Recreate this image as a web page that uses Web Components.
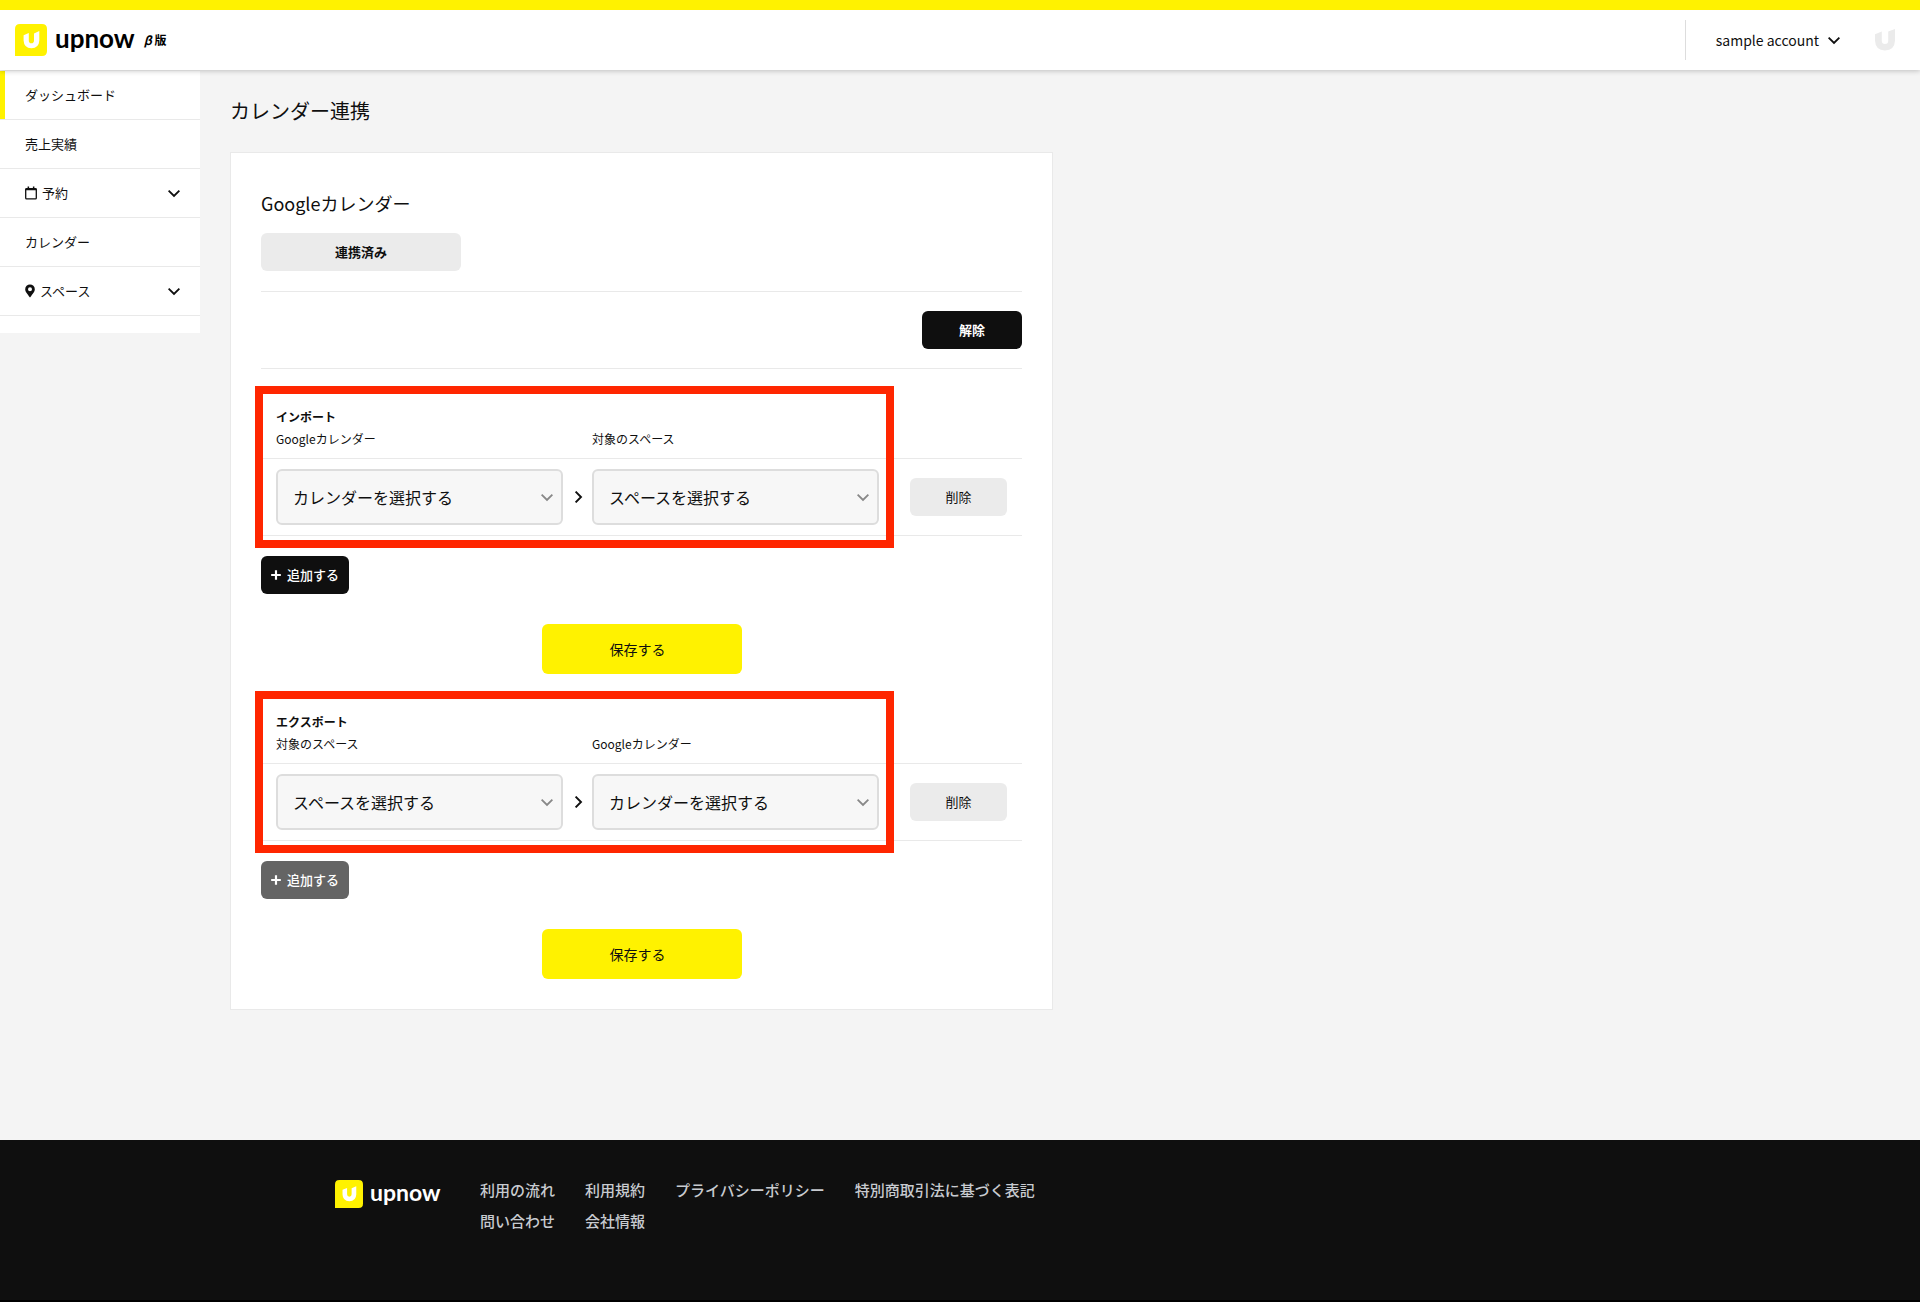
<!DOCTYPE html>
<html lang="ja">
<head>
<meta charset="utf-8">
<meta name="viewport" content="width=device-width, initial-scale=1">
<title>カレンダー連携 | upnow</title>
<style>
  :root {
    --yellow: #fff200;
    --ink: #0f0f0f;
    --line: #e9e9e9;
    --grey: #ebebeb;
    --page: #f4f4f4;
  }
  body {
    margin: 0;
    background: var(--page);
    color: var(--ink);
    font: 400 13px/22px "Noto Sans CJK JP", "Noto Sans", sans-serif;
  }
</style>
</head>
<body>
<upnow-app></upnow-app>
<script>
  const define = (name, html, setup) => {
    const template = document.createElement('template');
    template.innerHTML = html;
    customElements.define(name, class extends HTMLElement {
      connectedCallback() {
        if (this.shadowRoot) return;
        const root = this.attachShadow({ mode: 'open' });
        root.append(template.content.cloneNode(true));
        if (setup) setup(this, root);
      }
    });
  };

  /* Single-colour stroke chevron, rotated by attribute */
  define('ui-chevron', `
    <style>
      :host { display: inline-flex; width: 12px; height: 12px; flex: none; }
      :host([right]) svg { transform: rotate(-90deg); }
      svg { width: 12px; height: 12px; }
    </style>
    <svg viewBox="0 0 12 12" fill="none" stroke="currentColor" stroke-width="1.9" aria-hidden="true"><path d="M.6 3.6 6 9 11.4 3.6"/></svg>
  `);

  define('upnow-logo', `
    <style>
      :host { display: flex; align-items: center; gap: 8px; font: 700 26px/32px Lato, "Open Sans", sans-serif; --mark: 32px; }
      :host([small]) { font-size: 23px; line-height: 28px; --mark: 28px; gap: 7px; }
      svg { width: var(--mark); height: var(--mark); flex: none; }
      span { display: block; margin-top: -5px; }
    </style>
    <svg viewBox="0 0 32 32" aria-hidden="true">
      <path d="M5 0H27Q32 0 32 5V27Q32 32 27 32H0V5Q0 0 5 0Z" fill="#fff200"/>
      <path d="M8.6 11.2 13.8 9V16.4Q13.8 19.2 16.4 19.2Q19 19.2 19 16.4V9.4L24.3 7V16.6Q24 24.2 16.4 24.2Q8.9 24.2 8.6 16.6Z" fill="#fff"/>
    </svg>
    <span>upnow</span>
  `);

  define('upnow-header', `
    <style>
      :host { display: flex; align-items: center; justify-content: space-between; box-sizing: border-box; height: 70px;
        border-top: 10px solid var(--yellow); background: #fff; padding: 0 25px 0 15px;
        position: relative; z-index: 1; box-shadow: 0 1px 5px rgba(0,0,0,.22); }
      .brand { display: flex; align-items: center; gap: 9px; color: #000; text-decoration: none; }
      .beta { font-weight: 700; font-size: 12px; line-height: 20px; }
      .right { display: flex; align-items: center; gap: 35px; height: 40px; border-left: 1px solid #ddd; padding-left: 30px; }
      button { display: flex; align-items: center; gap: 9px; border: 0; background: none; padding: 0; color: inherit; font: inherit; font-size: 14px; line-height: 24px; }
      .avatar { width: 20px; height: 22px; }
    </style>
    <a class="brand" href="#"><upnow-logo></upnow-logo><span class="beta"><i>β</i> 版</span></a>
    <div class="right">
      <button type="button">sample account <ui-chevron></ui-chevron></button>
      <svg class="avatar" viewBox="0 0 20 22" aria-label="アカウント" role="img"><path d="M0 5.2 6.8 2.4V12Q6.8 15 10 15Q13.2 15 13.2 12V2.6L20 0V11.5Q19.6 21.4 10 21.4Q.4 21.4 0 11.5Z" fill="#ebebeb"/></svg>
    </div>
  `);

  define('side-item', `
    <style>
      :host { display: block; border-bottom: 1px solid var(--line); }
      a { display: flex; align-items: center; box-sizing: border-box; height: 48px; padding: 0 20px; border-left: 5px solid transparent; color: inherit; text-decoration: none; gap: 5px; }
      :host([active]) a { border-color: var(--yellow); }
      ui-chevron { display: none; margin-left: auto; }
      :host([more]) ui-chevron { display: inline-flex; }
      ::slotted(svg) { flex: none; }
    </style>
    <a href="#"><slot name="icon"></slot><span><slot></slot></span><ui-chevron></ui-chevron></a>
  `);

  define('side-nav', `
    <style>
      :host { display: block; width: 200px; flex: none; background: #fff; padding-bottom: 17px; }
    </style>
    <nav>
      <side-item active>ダッシュボード</side-item>
      <side-item>売上実績</side-item>
      <side-item more><svg slot="icon" width="12" height="14" viewBox="0 0 12 14" aria-hidden="true"><path fill="none" stroke="currentColor" stroke-width="1.3" d="M1.6 2.6H10.4Q11.3 2.6 11.3 3.5V12Q11.3 12.9 10.4 12.9H1.6Q.7 12.9 .7 12V3.5Q.7 2.6 1.6 2.6Z"/><path d="M.4 2.4H11.6V4.2H.4ZM2.6 .6H4.1V3H2.6ZM7.9 .6H9.4V3H7.9Z" fill="currentColor"/></svg>予約</side-item>
      <side-item>カレンダー</side-item>
      <side-item more><svg slot="icon" width="10" height="14" viewBox="0 0 10 14" aria-hidden="true"><path fill="currentColor" fill-rule="evenodd" d="M5 .4A4.8 4.8 0 0 1 9.8 5.2C9.8 7.8 8 9.2 5 13.6C2 9.2 .2 7.8 .2 5.2A4.8 4.8 0 0 1 5 .4ZM5 3.3A2 2 0 1 0 5 7.3A2 2 0 1 0 5 3.3Z"/></svg>スペース</side-item>
    </nav>
  `);

  define('ui-button', `
    <style>
      :host { display: block; }
      button { display: flex; align-items: center; justify-content: center; gap: 6px; width: 100%; height: 38px; border: 0; border-radius: 6px; padding: 0 10px;
        font: inherit; font-size: 13px; white-space: nowrap; background: var(--grey); color: var(--ink); }
      :host([kind=dark]) button { background: var(--ink); color: #fff; }
      :host([kind=muted]) button { background: #646464; color: #fff; }
      :host([kind=save]) button { background: var(--yellow); height: 50px; font-size: 14px; padding-right: 18px; }
      :host([bold]) button { font-weight: 700; }
      :host([medium]) button { font-weight: 500; }
    </style>
    <button type="button"><slot></slot></button>
  `);

  define('calendar-map', `
    <style>
      :host { display: block; padding-top: 37px; }
      .table { position: relative; }
      .row, .head { display: grid; grid-template-columns: minmax(0, 1fr) 29px minmax(0, 1fr) 128px; padding: 0 15px; }
      .head { padding-bottom: 8px; font-size: 12px; line-height: 22px; }
      h3 { grid-column: 1 / -1; margin: 0; font-size: 12px; line-height: 22px; font-weight: 700; }
      .head label:last-child { grid-column: 3; }
      .row { border: solid var(--line); border-width: 1px 0; padding: 10px 15px; align-items: center; }
      .row > ui-chevron { justify-self: center; }
      .row ui-button { margin-left: 31px; }
      .select { display: grid; align-items: center; }
      .select > * { grid-area: 1 / 1; }
      select { appearance: none; box-sizing: border-box; width: 100%; height: 56px; border: 2px solid #ddd; border-radius: 6px; background: #f7f7f7; padding: 0 36px 0 15px; color: inherit; font: inherit; font-size: 16px; }
      .select ui-chevron { justify-self: end; margin-right: 10px; color: #888; pointer-events: none; }
      .frame { position: absolute; inset: -20px 128px -12px -6px; border: 8px solid #ff2600; pointer-events: none; }
      .add { width: 88px; margin-top: 20px; }
      .save { width: 200px; margin: 30px auto 0; }
    </style>
    <div class="table">
      <div class="head">
        <h3></h3>
        <label for="from"></label>
        <label for="to"></label>
      </div>
      <div class="row">
        <div class="select"><select id="from"><option></option></select><ui-chevron></ui-chevron></div>
        <ui-chevron right></ui-chevron>
        <div class="select"><select id="to"><option></option></select><ui-chevron></ui-chevron></div>
        <ui-button>削除</ui-button>
      </div>
      <div class="frame"></div>
    </div>
    <ui-button class="add" medium><svg width="12" height="12" viewBox="0 0 12 12" aria-hidden="true"><path d="M6 .2V11.8M.2 6H11.8" stroke="currentColor" stroke-width="2.6"/></svg>追加する</ui-button>
    <ui-button class="save" kind="save">保存する</ui-button>
  `, (host, root) => {
    const names = { calendar: ['Googleカレンダー', 'カレンダーを選択する'], space: ['対象のスペース', 'スペースを選択する'] };
    root.querySelector('h3').textContent = host.getAttribute('heading');
    for (const side of ['from', 'to']) {
      const [label, prompt] = names[host.getAttribute(side)];
      root.querySelector('label[for=' + side + ']').textContent = label;
      root.querySelector('#' + side + ' option').textContent = prompt;
    }
    root.querySelector('.add').setAttribute('kind', host.getAttribute('add'));
  });

  define('calendar-card', `
    <style>
      :host { display: block; box-sizing: border-box; max-width: 823px; background: #fff; border: 1px solid var(--line); padding: 30px; }
      h2 { margin: 0 0 10px; font-size: 18px; line-height: 40px; font-weight: 400; }
      .status { width: 200px; margin-bottom: 20px; }
      .unlink { display: flex; justify-content: flex-end; border: solid var(--line); border-width: 1px 0; padding: 19px 0; }
      .unlink ui-button { width: 100px; }
    </style>
    <h2>Googleカレンダー</h2>
    <ui-button class="status" bold>連携済み</ui-button>
    <div class="unlink"><ui-button kind="dark" bold>解除</ui-button></div>
    <calendar-map heading="インポート" from="calendar" to="space" add="dark"></calendar-map>
    <calendar-map heading="エクスポート" from="space" to="calendar" add="muted"></calendar-map>
  `);

  define('upnow-footer', `
    <style>
      :host { display: block; background: var(--ink); border-bottom: 2px solid #000; color: #fff; }
      .inner { display: flex; align-items: flex-start; gap: 40px; max-width: 1250px; min-height: 80px; margin: 0 auto; padding: 40px 0; }
      upnow-logo { width: 105px; }
      ul { display: flex; flex-wrap: wrap; gap: 1px 30px; max-width: 625px; margin: -5px 0 0; padding: 0; list-style: none; }
      a { display: block; color: #c8cbd0; text-decoration: none; font-size: 15px; line-height: 30px; font-weight: 500; }
    </style>
    <footer class="inner">
      <upnow-logo small></upnow-logo>
      <ul>
        <li><a href="#">利用の流れ</a></li><li><a href="#">利用規約</a></li><li><a href="#">プライバシーポリシー</a></li>
        <li><a href="#">特別商取引法に基づく表記</a></li><li><a href="#">問い合わせ</a></li><li><a href="#">会社情報</a></li>
      </ul>
    </footer>
  `);

  define('upnow-app', `
    <style>
      :host { display: block; }
      .layout { display: flex; align-items: flex-start; padding-top: 1px; }
      main { flex: 1; min-width: 0; padding: 25px 30px 130px; }
      h1 { margin: 0 0 26px; font-size: 20px; line-height: 30px; font-weight: 400; }
    </style>
    <upnow-header></upnow-header>
    <div class="layout">
      <side-nav></side-nav>
      <main>
        <h1>カレンダー連携</h1>
        <calendar-card></calendar-card>
      </main>
    </div>
    <upnow-footer></upnow-footer>
  `);
</script>
</body>
</html>
